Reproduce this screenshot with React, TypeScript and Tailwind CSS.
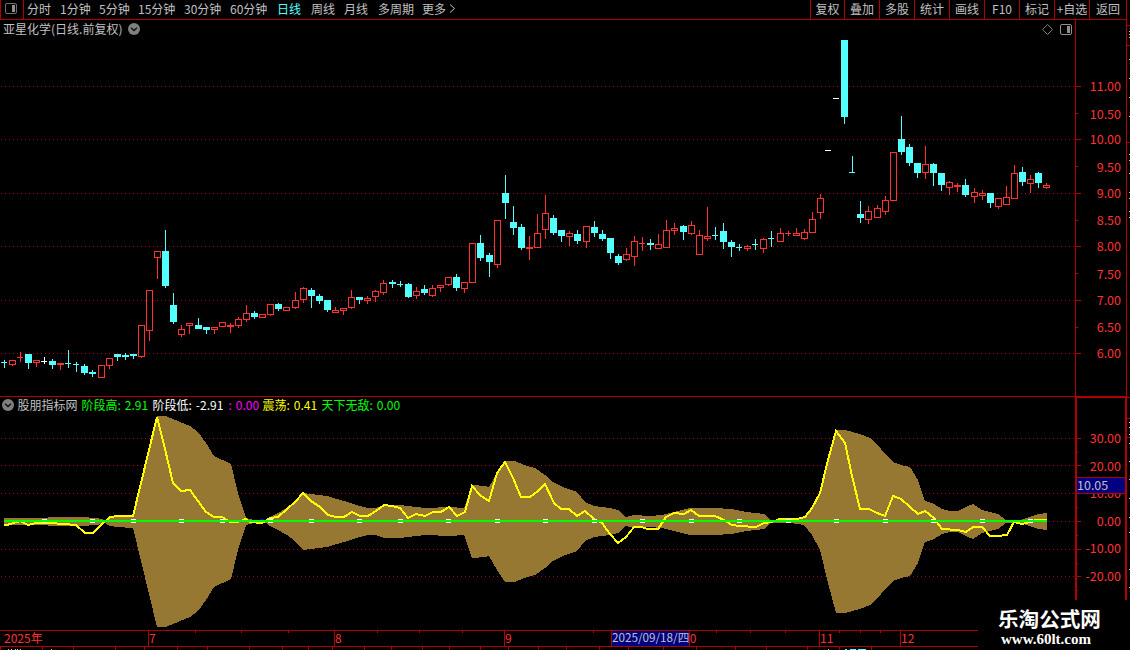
import { clsx } from 'clsx';

type Kind = 'up' | 'down' | 'flat';
// body top, body bottom, high, low
type Candle = [Kind, number, number, number, number];

const PERIODS = [
  { label: '分时', width: 'w-[33px]' },
  { label: '1分钟', width: 'w-[39px]' },
  { label: '5分钟', width: 'w-[39px]' },
  { label: '15分钟', width: 'w-[46px]' },
  { label: '30分钟', width: 'w-[46px]' },
  { label: '60分钟', width: 'w-[47px]' },
  { label: '日线', width: 'w-[34px]', active: true },
  { label: '周线', width: 'w-[33px]' },
  { label: '月线', width: 'w-[34px]' },
  { label: '多周期', width: 'w-[44px]' },
  { label: '更多', width: 'w-[27px]' },
];

const ACTIONS = ['复权', '叠加', '多股', '统计', '画线', 'F10', '标记', '+自选', '返回'];

const CANDLES: Candle[] = [
  ['down', 362, 363, 360, 368],
  ['up', 360, 365, 360, 366],
  ['up', 357, 358, 352, 362],
  ['down', 354, 363, 354, 369],
  ['up', 360, 363, 360, 367],
  ['flat', 361, 362, 357, 364],
  ['down', 361, 365, 359, 369],
  ['up', 363, 365, 363, 370],
  ['down', 363, 364, 350, 368],
  ['down', 364, 365, 362, 372],
  ['down', 366, 373, 364, 375],
  ['down', 372, 374, 370, 377],
  ['up', 365, 378, 365, 378],
  ['up', 358, 366, 358, 369],
  ['down', 354, 357, 354, 361],
  ['down', 355, 357, 353, 360],
  ['down', 354, 356, 354, 359],
  ['up', 325, 357, 325, 358],
  ['up', 290, 331, 290, 341],
  ['up', 251, 258, 251, 279],
  ['down', 251, 286, 230, 288],
  ['down', 305, 322, 293, 324],
  ['up', 329, 335, 325, 337],
  ['up', 323, 326, 323, 334],
  ['down', 325, 329, 318, 329],
  ['down', 327, 330, 327, 334],
  ['up', 327, 330, 327, 334],
  ['up', 322, 327, 322, 327],
  ['up', 325, 327, 323, 333],
  ['up', 319, 326, 317, 328],
  ['up', 313, 320, 305, 322],
  ['down', 313, 317, 311, 319],
  ['up', 314, 318, 314, 318],
  ['up', 304, 315, 304, 316],
  ['down', 304, 309, 303, 311],
  ['up', 307, 311, 307, 311],
  ['up', 300, 308, 292, 309],
  ['up', 288, 300, 287, 303],
  ['down', 290, 296, 288, 308],
  ['down', 296, 301, 294, 304],
  ['down', 300, 310, 300, 312],
  ['up', 310, 313, 307, 313],
  ['up', 308, 311, 308, 315],
  ['up', 297, 308, 290, 309],
  ['down', 297, 300, 297, 304],
  ['up', 298, 301, 296, 304],
  ['up', 291, 297, 290, 302],
  ['up', 283, 293, 280, 295],
  ['down', 282, 284, 280, 288],
  ['down', 284, 285, 281, 287],
  ['down', 284, 297, 283, 298],
  ['up', 291, 296, 287, 299],
  ['down', 289, 293, 285, 295],
  ['up', 288, 296, 285, 297],
  ['up', 285, 288, 285, 292],
  ['up', 277, 285, 277, 286],
  ['down', 277, 288, 274, 291],
  ['up', 282, 289, 282, 293],
  ['up', 243, 283, 243, 283],
  ['down', 243, 258, 235, 261],
  ['down', 255, 262, 253, 277],
  ['up', 220, 265, 220, 268],
  ['down', 193, 203, 175, 219],
  ['down', 222, 228, 206, 235],
  ['down', 227, 248, 224, 250],
  ['up', 247, 249, 236, 260],
  ['up', 233, 248, 214, 248],
  ['up', 213, 230, 195, 239],
  ['down', 218, 233, 215, 235],
  ['down', 230, 236, 230, 242],
  ['up', 233, 237, 231, 246],
  ['down', 234, 241, 230, 244],
  ['up', 226, 242, 226, 248],
  ['down', 227, 233, 221, 237],
  ['down', 234, 239, 230, 241],
  ['down', 238, 253, 238, 259],
  ['down', 256, 263, 254, 265],
  ['up', 254, 260, 248, 261],
  ['up', 241, 257, 236, 266],
  ['up', 243, 244, 237, 251],
  ['down', 243, 245, 239, 250],
  ['up', 244, 249, 234, 249],
  ['up', 230, 248, 220, 248],
  ['up', 228, 231, 223, 235],
  ['down', 226, 232, 225, 240],
  ['up', 225, 234, 221, 235],
  ['up', 235, 255, 230, 255],
  ['up', 236, 239, 207, 241],
  ['down', 235, 236, 227, 240],
  ['down', 231, 242, 223, 249],
  ['down', 242, 247, 240, 257],
  ['down', 247, 248, 244, 251],
  ['up', 246, 249, 245, 251],
  ['down', 244, 245, 239, 250],
  ['up', 239, 249, 238, 253],
  ['down', 238, 239, 231, 247],
  ['up', 233, 242, 228, 242],
  ['up', 233, 234, 231, 236],
  ['up', 233, 236, 228, 236],
  ['up', 232, 239, 229, 240],
  ['up', 219, 233, 212, 233],
  ['up', 198, 213, 194, 219],
  ['flat', 150, 151, 150, 151],
  ['flat', 98, 99, 98, 99],
  ['down', 40, 117, 40, 124],
  ['down', 172, 173, 156, 173],
  ['down', 214, 218, 201, 223],
  ['up', 211, 220, 206, 224],
  ['up', 208, 218, 205, 218],
  ['up', 200, 212, 196, 215],
  ['up', 152, 201, 152, 201],
  ['down', 139, 152, 116, 155],
  ['down', 147, 163, 144, 166],
  ['down', 163, 173, 163, 178],
  ['up', 164, 173, 146, 179],
  ['down', 164, 173, 163, 186],
  ['down', 173, 185, 173, 191],
  ['up', 182, 188, 181, 195],
  ['up', 185, 187, 183, 192],
  ['down', 185, 195, 179, 197],
  ['up', 192, 197, 188, 203],
  ['up', 193, 196, 190, 200],
  ['down', 193, 203, 193, 208],
  ['up', 198, 207, 198, 209],
  ['up', 197, 205, 186, 205],
  ['up', 173, 199, 165, 199],
  ['down', 172, 182, 167, 186],
  ['up', 179, 184, 175, 193],
  ['down', 173, 183, 172, 188],
  ['up', 185, 188, 183, 189],
];

const COLORS: Record<Kind, string> = { up: '#ff3232', down: '#54ffff', flat: '#ffffff' };

// Upper edge of the band, the lower one mirrors it around the zero line
const BAND: [number, number][] = [
  [4, 518], [40, 518], [56, 517], [80, 517], [97, 518], [105, 520], [110, 517], [117, 516], [133, 515],
  [157, 416], [166, 416], [173, 419], [190, 426], [198, 432], [206, 443], [214, 456], [231, 464],
  [238, 493], [246, 518], [254, 520], [266, 520], [270, 517], [278, 513], [287, 508], [295, 502],
  [303, 493], [311, 494], [327, 496], [344, 501], [360, 506], [368, 508], [376, 508], [384, 505],
  [400, 505], [425, 508], [450, 507], [464, 508], [472, 485], [485, 486], [489, 487], [497, 473],
  [505, 461], [515, 461], [524, 465], [535, 468], [545, 475], [553, 482], [565, 488], [577, 492],
  [585, 502], [594, 506], [610, 508], [618, 510], [626, 517], [634, 515], [650, 516], [662, 515],
  [670, 513], [690, 508], [715, 508], [731, 509], [747, 512], [764, 514], [771, 520], [790, 520],
  [804, 518], [812, 508], [820, 493], [828, 460], [836, 430], [845, 430], [860, 434], [870, 438],
  [877, 444], [885, 454], [893, 462], [901, 465], [910, 467], [918, 480], [925, 501], [934, 504],
  [942, 509], [950, 511], [958, 511], [966, 507], [973, 504], [982, 510], [990, 512], [998, 514],
  [1006, 520], [1020, 520], [1030, 517], [1038, 514], [1047, 513],
];

const LINE =
  '4,525 7,525 20,521 28,525 36,523 50,523 76,525 85,533 93,533 101,525 110,517 118,516 133,516 157,417 ' +
  '165,449 173,483 181,491 190,490 198,501 206,512 214,517 222,517 230,522 238,522 246,519 250,522 262,523 ' +
  '270,518 278,517 287,509 295,502 303,493 311,501 320,507 328,515 336,517 344,517 352,512 360,516 368,516 ' +
  '376,511 384,505 392,506 400,508 408,518 416,514 425,516 433,512 441,512 449,507 457,516 465,512 472,486 ' +
  '481,496 489,501 497,473 505,462 513,478 521,497 530,497 538,491 545,484 554,503 561,509 569,509 577,516 ' +
  '585,511 594,519 602,523 610,534 618,543 626,537 634,527 642,527 647,529 658,529 666,517 674,513 684,514 ' +
  '691,510 699,516 715,516 724,520 732,525 740,526 756,527 764,523 772,522 780,519 797,519 805,517 812,508 ' +
  '820,493 828,460 836,431 845,443 852,476 860,509 869,509 877,513 885,516 893,496 901,499 910,507 918,514 ' +
  '925,511 934,518 942,529 958,530 966,532 973,527 982,527 990,536 998,536 1007,535 1014,522 1022,524 ' +
  '1030,522 1035,520 1047,520';

const MARKS = [5, 11, 16, 22, 27, 33, 38, 44, 49, 55, 61, 67, 73, 79, 85, 91, 97, 103, 109, 115, 121, 127];

const READOUT = [
  { name: '股朋指标网', value: '', color: 'text-[#c0c0c0]', width: 'w-[64px]' },
  { name: '阶段高:', value: '2.91', color: 'text-[#00ff00]', width: 'w-[71px]' },
  { name: '阶段低:', value: '-2.91', color: 'text-white', width: 'w-[76px]' },
  { name: ':', value: '0.00', color: 'text-[#ff00ff]', width: 'w-[34px]' },
  { name: '震荡:', value: '0.41', color: 'text-[#ffff00]', width: 'w-[59px]' },
  { name: '天下无敌:', value: '0.00', color: 'text-[#00ff00]', width: 'w-[90px]' },
];

const PRICES = [
  ['11.00', '10.50'],
  ['10.00', '9.50'],
  ['9.00', '8.50'],
  ['8.00', '7.50'],
  ['7.00', '6.50'],
  ['6.00', ''],
];

const MONTHS = [
  { label: '2025年', cell: 'w-[148px] pl-[4px]' },
  { label: '7', cell: 'w-[186px] border-l' },
  { label: '8', cell: 'w-[170px] border-l' },
  { label: '9', cell: 'w-[178px] border-l' },
  { label: '10', cell: 'w-[137px] border-l' },
  { label: '11', cell: 'w-[81px] border-l' },
  { label: '12', cell: 'w-[78px] border-l' },
];

const WEEK_TICKS = [195, 241, 288, 377, 419, 462, 593, 716, 750, 785, 839, 860, 880];
const STRIP_TICKS = [
  0, 42, 73, 115, 144, 177, 207, 249, 282, 308, 332, 364, 391, 422, 449, 480, 508, 538, 566, 599, 628, 663,
  696, 735, 766, 807, 839, 871,
];

const GRID_PRICE = [86, 139, 193, 246, 300, 353];
const GRID_IND = [438, 465, 493, 521, 549, 576];

const candleX = (i: number) => Math.floor(4.01 + (i * 97) / 12);

function GridLines({ rows }: { rows: number[] }) {
  return (
    <>
      {rows.map((y) => (
        <line key={y} x1="1" x2="1075" y1={y + 0.5} y2={y + 0.5} stroke="#b00000" strokeDasharray="1 3" />
      ))}
    </>
  );
}

function PanelIcon({ dark }: { dark?: boolean }) {
  return (
    <svg width="12" height="11" viewBox="0 0 12 11">
      <rect x="0.5" y="0.5" width="11" height="10" rx="1.5" fill="none" stroke={dark ? '#707070' : '#909090'} />
      <rect x="7" y="2" width="3" height="7" fill="#909090" />
    </svg>
  );
}

function DropIcon() {
  return (
    <svg width="12" height="12" viewBox="0 0 12 12">
      <circle cx="6" cy="6" r="6" fill="#808080" />
      <path d="M3 4.8 L6 7.5 L9 4.8" fill="none" stroke="#101010" strokeWidth="1.5" />
    </svg>
  );
}

function Toolbar() {
  return (
    <div className="flex h-5 justify-between border-b border-[#b00000]">
      <div className="flex">
        <div className="flex w-6 items-center border-x border-[#b00000] pb-[2px] pl-1">
          <PanelIcon dark />
        </div>
        <div className="flex items-center pb-[2px] pl-[3px] text-[#c0c0c0]">
          {PERIODS.map((p) => (
            <span key={p.label} className={clsx(p.width, p.active && 'text-[#54ffff]')}>
              {p.label}
            </span>
          ))}
          <svg width="7" height="9" viewBox="0 0 7 9">
            <path d="M1 0.5 L5.5 4.5 L1 8.5" fill="none" stroke="#c0c0c0" />
          </svg>
        </div>
      </div>
      <div className="flex border-r border-[#b00000] text-[#c0c0c0]">
        {ACTIONS.map((a, i) => (
          <div
            key={a}
            className={clsx(
              'flex items-center justify-center border-l border-[#b00000] pb-[2px]',
              i === 0 ? 'w-[34px]' : i === 8 ? 'w-[37px]' : 'w-[35px]',
            )}
          >
            {a}
          </div>
        ))}
      </div>
    </div>
  );
}

function PriceChart() {
  return (
    <svg width="1075" height="356" viewBox="0 40 1075 356" shapeRendering="crispEdges" className="block">
      <GridLines rows={GRID_PRICE} />
      {CANDLES.map(([kind, top, bottom, high, low], i) => {
        const x = candleX(i);
        const h = bottom - top;
        const color = COLORS[kind];
        const hollow = kind === 'up' && h > 2;
        return (
          <g key={i} fill={color}>
            {high < top && <rect x={x} y={high} width="1" height={top - high} />}
            {low > bottom && <rect x={x} y={bottom} width="1" height={low - bottom} />}
            {hollow ? (
              <rect x={x - 2.5} y={top + 0.5} width="6" height={h - 1} fill="#000000" stroke={color} />
            ) : (
              <rect x={x - 3} y={top} width={h === 1 ? 6 : 7} height={h} />
            )}
          </g>
        );
      })}
    </svg>
  );
}

function IndicatorChart() {
  const upper = BAND.map(([x, y]) => `${x},${y}`);
  const lower = [...BAND].reverse().map(([x, y]) => `${x},${1043 - y}`);
  return (
    <svg width="1075" height="214" viewBox="0 416 1075 214" shapeRendering="crispEdges" className="block">
      <GridLines rows={GRID_IND} />
      <polygon points={[...upper, ...lower].join(' ')} fill="#967832" />
      <polyline points={LINE} fill="none" stroke="#ffff00" strokeWidth="2" />
      <rect x="260" y="519" width="4" height="1" fill="#0000ff" />
      {MARKS.map((i) => (
        <rect key={i} x={candleX(i) - 2} y="519" width="5" height="4" fill="#ffffff" />
      ))}
      <rect x="4" y="520" width="1043" height="2" fill="#00ff00" />
    </svg>
  );
}

function PriceAxis() {
  return (
    <div className="flex h-full border-x border-[#b00000] text-[#ff3232]">
      <svg width="6" height="376" viewBox="0 20 6 376" shapeRendering="crispEdges" fill="#b00000">
        {GRID_PRICE.map((y) => (
          <g key={y}>
            <rect x="0" y={y} width="5" height="1" />
            {y < 353 && <rect x="0" y={y + 27} width="2" height="1" />}
          </g>
        ))}
      </svg>
      <div className="flex flex-1 flex-col pt-[57px] pr-[5px] text-right text-[12.5px]">
        {PRICES.map(([major, minor]) => (
          <div key={major} className="h-[53.4px] shrink-0">
            <div className="h-[27.5px] leading-[18px]">{major}</div>
            <div className="leading-[18px]">{minor}</div>
          </div>
        ))}
      </div>
    </div>
  );
}

function IndicatorAxis() {
  return (
    <div className="relative flex h-[233px] border-x-2 border-t border-[#b00000] text-[#ff3232]">
      <svg width="5" height="232" viewBox="0 398 5 232" shapeRendering="crispEdges" fill="#b00000">
        {GRID_IND.map((y) => (
          <g key={y}>
            <rect x="0" y={y} width="4" height="1" />
            <rect x="0" y={y + 14} width="1" height="1" />
          </g>
        ))}
      </svg>
      <div className="flex flex-1 flex-col pt-[31px] pr-[4px] text-right text-[12.5px]">
        {['30.00', '20.00', '10.00', '0.00', '-10.00', '-20.00'].map((v) => (
          <span key={v} className="h-[27.6px] shrink-0 leading-[18px]">
            {v}
          </span>
        ))}
      </div>
      {/* Cursor value */}
      <div className="absolute top-[79px] left-0 h-[17px] w-full border-y border-[#b00000] bg-[#000080] text-[12.5px] leading-[13px] text-[#c0c0c0]">
        10.05
      </div>
    </div>
  );
}

function DateAxis() {
  return (
    <div className="relative flex h-[17px] border-y border-[#b00000] text-[#ff3232]">
      {MONTHS.map((m) => (
        <div key={m.label} className={clsx('shrink-0 border-[#b00000] text-xs leading-[14px]', m.cell)}>
          {m.label}
        </div>
      ))}
      <svg className="absolute top-0 left-0" width="978" height="2" fill="#b00000">
        {WEEK_TICKS.map((x) => (
          <rect key={x} x={x} y="0" width="1" height="2" />
        ))}
      </svg>
      {/* Cursor date */}
      <div className="absolute top-0 left-[611px] h-[15px] w-[79px] border-x border-[#b00000] bg-[#000080] text-[11.7px] leading-[12px] whitespace-nowrap text-[#c0c0c0]">
        2025/09/18/四
      </div>
    </div>
  );
}

function BottomStrip() {
  return (
    <svg width="1075" height="3" shapeRendering="crispEdges" className="block">
      {STRIP_TICKS.map((x) => (
        <rect key={x} x={x} y="0" width="1" height="3" fill="#b00000" />
      ))}
      {[8, 11, 15, 17, 20, 51, 828].map((x) => (
        <rect key={x} x={x} y="2" width="1" height="1" fill="#c0c0c0" />
      ))}
      <path d="M845 2h2v1h-2z M850 2h6v1h-6z M858 2h8v1h-8z" fill="#54ffff" />
    </svg>
  );
}

function EdgeStrip() {
  return (
    <svg width="3" height="650" shapeRendering="crispEdges">
      {[25, 45, 142, 397, 418, 437].map((y) => (
        <rect key={y} x="0" y={y} width="3" height="1" fill="#b00000" />
      ))}
      {[31, 34, 37, 59, 78, 97, 116, 154, 160, 173, 192, 198, 211, 217, 422, 427, 434, 443, 461, 479, 498, 517, 532, 569, 587].map((y) => (
        <rect key={y} x="2" y={y} width="1" height="1" fill="#c0c0c0" />
      ))}
    </svg>
  );
}

export default function App() {
  return (
    <div className="relative flex h-[650px] w-[1130px] overflow-hidden bg-black font-['Noto_Sans_CJK_SC',sans-serif] text-xs leading-none">
      <div className="flex w-[1127px] flex-col">
        <Toolbar />
        <div className="flex h-[377px] border-b border-[#b00000]">
          <div className="w-[1075px]">
            <div className="flex h-5 items-center justify-between pr-[3px] pb-[2px] pl-[3px] text-[#c0c0c0]">
              <div className="flex items-center gap-[6px]">
                <span>亚星化学(日线.前复权)</span>
                <DropIcon />
              </div>
              <div className="flex items-center gap-[7px]">
                <svg width="11" height="11" viewBox="0 0 11 11">
                  <path d="M5.5 0.5 L10.5 5.5 L5.5 10.5 L0.5 5.5 Z" fill="none" stroke="#808080" />
                </svg>
                <PanelIcon />
              </div>
            </div>
            <PriceChart />
          </div>
          <div className="w-[52px]">
            <PriceAxis />
          </div>
        </div>
        <div className="flex h-[233px]">
          <div className="w-[1075px]">
            <div className="flex h-[19px] items-center pb-[3px] pl-[2px]">
              <div className="w-[15.5px]">
                <DropIcon />
              </div>
              {READOUT.map((r) => (
                <div key={r.name} className={clsx('flex shrink-0 gap-[4px] whitespace-nowrap', r.width, r.color)}>
                  <span>{r.name}</span>
                  <span>{r.value}</span>
                </div>
              ))}
            </div>
            <IndicatorChart />
          </div>
          <div className="w-[52px]">
            <IndicatorAxis />
          </div>
        </div>
        <DateAxis />
        <BottomStrip />
      </div>
      <EdgeStrip />

      {/* Site watermark */}
      <div className="absolute right-0 bottom-0 flex h-[50px] w-[152px] flex-col bg-black pl-[20px] text-white">
        <span className="mt-[7px] text-[20.6px] leading-[22px] font-bold">乐淘公式网</span>
        <span className="ml-[3px] font-['Liberation_Serif',serif] text-[15px] leading-[20px] font-bold">
          www.60lt.com
        </span>
      </div>
    </div>
  );
}
